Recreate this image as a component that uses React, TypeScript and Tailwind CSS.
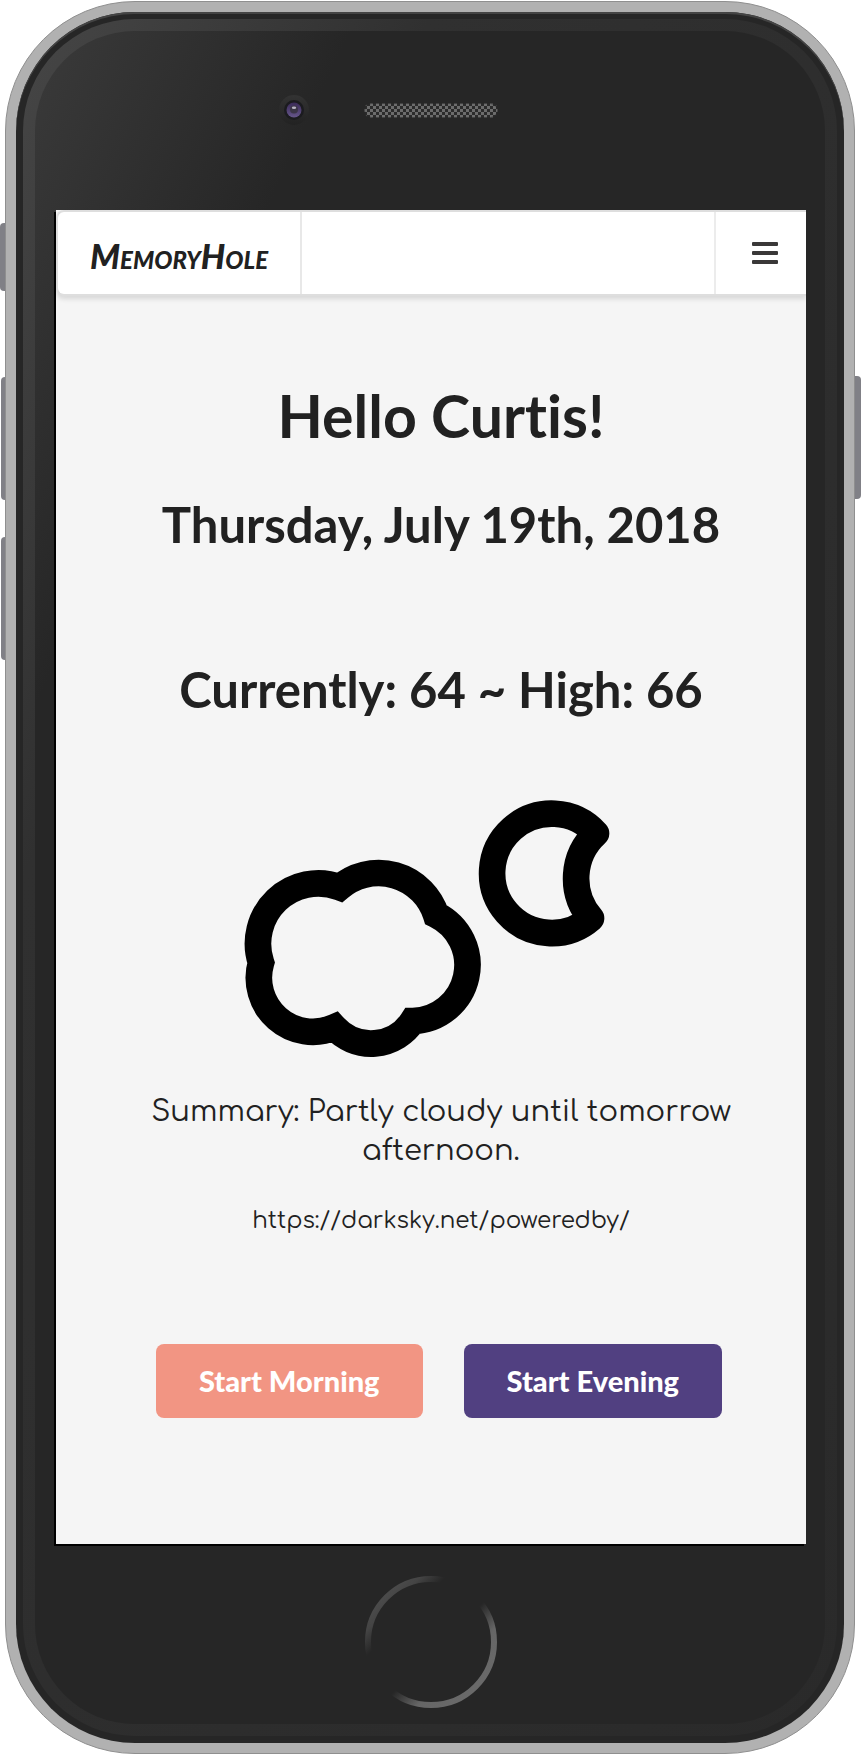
import React from "react";

function WeatherIcon() {
  return (
    <svg
      viewBox="0 0 1200 870"
      className="h-[290px] w-[400px]"
      fill="none"
      stroke="#000"
      strokeWidth="80"
      role="img"
      aria-label="Partly cloudy night"
    >
      <path d="M93 548A181 181 0 0 1 329 322A181 181 0 0 1 618 404A168 168 0 0 1 548 723A149 149 0 0 1 313 742A162 162 0 0 1 93 548Z" />
      <path
        strokeLinejoin="round"
        d="M1098 160A179 179 0 1 0 1083 415A183 183 0 0 1 1098 160Z"
      />
    </svg>
  );
}

function Camera() {
  return (
    <svg viewBox="0 0 30 30" className="size-[30px] shrink-0" aria-hidden="true">
      <defs>
        <linearGradient id="lensRim" x1="0" y1="0" x2="0" y2="1">
          <stop offset="0" stopColor="#333333" />
          <stop offset="1" stopColor="#222222" />
        </linearGradient>
        <linearGradient id="lensGlass" x1="0" y1="0" x2="0" y2="1">
          <stop offset="0" stopColor="#3a2a58" />
          <stop offset="1" stopColor="#66568a" />
        </linearGradient>
      </defs>
      <circle cx="15" cy="15" r="15" fill="url(#lensRim)" />
      <circle cx="15" cy="15" r="10" fill="#1b1b1f" />
      <circle cx="15" cy="15" r="7.5" fill="url(#lensGlass)" />
      <circle cx="15" cy="14.5" r="4" fill="#3b3547" />
      <ellipse cx="15" cy="12.8" rx="2.2" ry="1.3" fill="#b9b4c4" />
    </svg>
  );
}

function Speaker() {
  return (
    <svg viewBox="0 0 134 15" className="h-[15px] w-[134px] shrink-0" aria-hidden="true">
      <defs>
        <pattern id="mesh" width="6" height="6" patternUnits="userSpaceOnUse">
          <rect width="6" height="6" fill="#2b2b2b" />
          <rect width="3" height="3" fill="#6c6c6c" />
          <rect x="3" y="3" width="3" height="3" fill="#6c6c6c" />
        </pattern>
      </defs>
      <rect width="134" height="15" rx="7.5" fill="url(#mesh)" />
      <rect x="0.5" y="0.5" width="133" height="14" rx="7" fill="none" stroke="#262626" strokeOpacity="0.6" />
    </svg>
  );
}

function HomeButton() {
  return (
    <button type="button" aria-label="Home" className="size-[132px] rounded-full">
      <svg viewBox="0 0 132 132" className="size-full" aria-hidden="true">
        <defs>
          <linearGradient id="homeRing" x1="0" y1="0" x2="1" y2="1">
            <stop offset="0.12" stopColor="#4c4c4c" />
            <stop offset="0.2" stopColor="#444444" />
            <stop offset="0.3" stopColor="#262626" />
            <stop offset="0.55" stopColor="#262626" />
            <stop offset="0.7" stopColor="#666666" />
            <stop offset="1" stopColor="#6c6c6c" />
          </linearGradient>
        </defs>
        <circle cx="66" cy="66" r="63" fill="none" stroke="url(#homeRing)" strokeWidth="6" />
      </svg>
    </button>
  );
}

function NavBar() {
  return (
    <header className="flex h-[86px] rounded-l-lg border-y-2 border-l-2 border-[#dedede] bg-white shadow-[0_3px_5px_rgba(0,0,0,0.12)]">
      <a
        href="#home"
        className="flex items-center border-r-2 border-[#e8e8e8] px-8 pt-1 font-['Permanent_Marker','Lato',sans-serif] text-[34px] font-black text-[#212121] italic [font-variant:small-caps]"
      >
        MemoryHole
      </a>
      <button
        type="button"
        aria-label="Menu"
        className="ml-auto flex w-[92px] items-center justify-end border-l-2 border-[#ececec] pr-7"
      >
        <svg viewBox="0 0 26 24" className="h-6 w-[26px]" fill="#3a3838" aria-hidden="true">
          <rect y="1" width="26" height="4" rx="1" />
          <rect y="10" width="26" height="4" rx="1" />
          <rect y="19" width="26" height="4" rx="1" />
        </svg>
      </button>
    </header>
  );
}

function Screen() {
  return (
    <div className="bg-[#f5f5f5] shadow-[-2px_2px_0_#000]">
      <div className="overflow-hidden bg-[#f5f5f5]">
        <NavBar />
        <main className="flex flex-col items-center pr-[70px] pb-[126px] pl-[90px] text-center font-['Lato',sans-serif] text-[#212121]">
          <h1 className="mt-[82px] text-[59px] leading-[76px] font-bold [font-variant-ligatures:none]">
            Hello Curtis!
          </h1>
          <h2 className="mt-[38px] text-[49px] leading-16 font-bold">Thursday, July 19th, 2018</h2>
          <h2 className="mt-[101px] text-[49px] leading-16 font-bold">Currently: 64 ~ High: 66</h2>
          <div className="mt-[59px] self-start pl-[84px]">
            <WeatherIcon />
          </div>
          <p className="mt-[22px] font-['Comfortaa','Lato',sans-serif] text-[29px] leading-[39px]">
            Summary: Partly cloudy until tomorrow
            <br />
            afternoon.
          </p>
          <a
            href="https://darksky.net/poweredby/"
            className="mt-[33px] font-['Comfortaa','Lato',sans-serif] text-[23px] leading-9"
          >
            https://darksky.net/poweredby/
          </a>
          <div className="mt-[105px] flex gap-[41px] pr-1">
            <button
              type="button"
              className="h-[74px] rounded-lg bg-[#f29583] px-[43px] text-[29px] font-black text-white"
            >
              Start Morning
            </button>
            <button
              type="button"
              className="h-[74px] rounded-lg bg-[#514081] px-[43px] text-[29px] font-black text-white"
            >
              Start Evening
            </button>
          </div>
        </main>
      </div>
    </div>
  );
}

export default function App() {
  return (
    <div className="bg-white pt-px pr-[7px] pl-[5px]">
      <div className="relative">
        <div className="absolute top-[222px] -left-[5px] h-[68px] w-[6px] rounded-l bg-[#808086]" />
        <div className="absolute top-[376px] -left-1 h-[123px] w-[5px] rounded-l bg-[#808086]" />
        <div className="absolute top-[536px] -left-1 h-[123px] w-[5px] rounded-l bg-[#808086]" />
        <div className="absolute top-[375px] -right-[6px] h-[123px] w-[7px] rounded-r bg-[#808086]" />
        <div className="relative rounded-[130px] border border-[#8f8f8f] bg-[#b1b1b1] p-[10px]">
          <div className="rounded-[119px] bg-[#262626] p-[7px] shadow-[inset_0_2px_0_#444]">
            <div className="rounded-[112px] bg-linear-[to_bottom_right,#464646_0%,#303030_25%,#2a2a2a_100%] p-3">
              <div className="rounded-[100px] bg-[#262626] bg-linear-[to_bottom_right,#3a3a3a_0%,#262626_20%] pr-[19px] pl-[21px]">
                <div className="flex h-[179px] items-start justify-center gap-[55px] pt-16 pr-[85px]">
                  <Camera />
                  <div className="pt-2">
                    <Speaker />
                  </div>
                </div>
                <Screen />
                <div className="flex h-[180px] justify-center pt-8">
                  <HomeButton />
                </div>
              </div>
            </div>
          </div>
        </div>
      </div>
    </div>
  );
}
